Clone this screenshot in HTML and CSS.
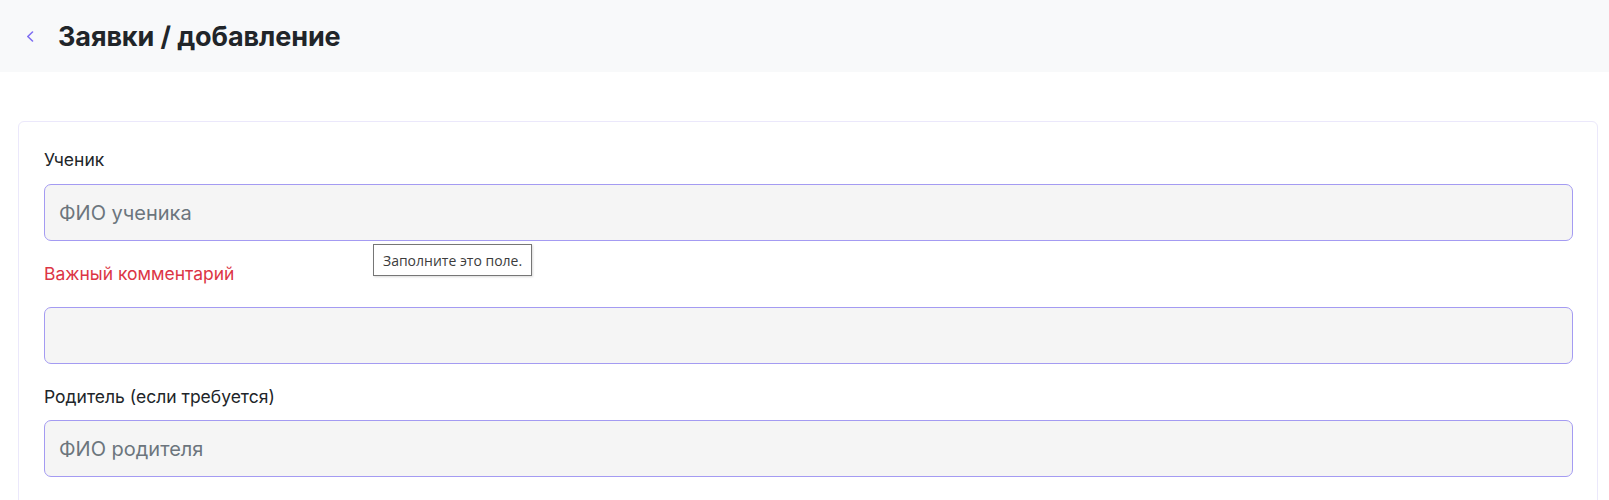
FILE: index.html
```html
<!DOCTYPE html>
<html lang="ru">
<head>
<meta charset="utf-8">
<title>Заявки / добавление</title>
<link rel="stylesheet" href="styles.css">
</head>
<body>
<header class="topbar">
  <a class="back" href="#" aria-label="Назад">
    <svg width="8" height="11" viewBox="0 0 8 11"><path d="M6.5 1 L1.8 5.5 L6.5 10" fill="none" stroke="#7f6ef2" stroke-width="1.6" stroke-linecap="round" stroke-linejoin="round"/></svg>
  </a>
  <h1 class="title">Заявки / добавление</h1>
</header>
<main class="page">
  <form class="card">
    <div class="field">
      <label class="label">Ученик</label>
      <div class="input-wrap">
        <input class="input" type="text" placeholder="ФИО ученика">
        <div class="tooltip">Заполните это поле.</div>
      </div>
    </div>
    <div class="field">
      <label class="label label-danger">Важный комментарий</label>
      <input class="input" type="text">
    </div>
    <div class="field">
      <label class="label label-tight">Родитель (если требуется)</label>
      <input class="input" type="text" placeholder="ФИО родителя">
    </div>
  </form>
</main>
</body>
</html>
```
FILE: styles.css
```css
* { box-sizing: border-box; }
html, body { margin: 0; padding: 0; background: #ffffff; }
body {
  font-family: Inter, "Noto Sans", sans-serif;
  color: #212529;
  overflow: hidden;
}
.topbar {
  height: 72px;
  background: #f8f9fa;
  display: flex;
  align-items: center;
  padding-left: 26px;
}
.back {
  display: flex;
  align-items: center;
  width: 32px;
  height: 20px;
  margin-top: 1px;
}
.title {
  margin: 0;
  font-size: 27px;
  font-weight: 700;
  color: #212529;
  letter-spacing: -0.1px;
}
.page {
  padding: 49px 11px 0 18px;
}
.card {
  border: 1px solid #ebe8fb;
  border-radius: 6px;
  padding: 26px 24px 40px 25px;
  background: #fff;
}
.field { display: flex; flex-direction: column; }
.field + .field { margin-top: 21px; }
.label {
  font-size: 17.5px;
  line-height: 24px;
  color: #212529;
  margin-bottom: 12px;
}
.label-danger { color: #dc3545; margin-bottom: 21px; }
.label-tight { margin-bottom: 11px; }
.input-wrap { position: relative; }
.input {
  display: block;
  width: 100%;
  height: 57px;
  border: 1px solid #a49bf2;
  border-radius: 7px;
  background: #f5f5f5;
  padding: 0 14px;
  font-family: Inter, "Noto Sans", sans-serif;
  font-size: 20px;
  color: #212529;
  outline: none;
}
.input::placeholder { color: #6c757d; }
.tooltip {
  position: absolute;
  left: 329px;
  top: 60px;
  height: 32px;
  padding: 0 9px;
  display: flex;
  align-items: center;
  border: 1px solid #767676;
  background: #fff;
  font-family: "Open Sans", "Noto Sans", sans-serif;
  font-size: 14px;
  color: #3c3c3c;
  box-shadow: 1px 1px 2px rgba(0,0,0,0.15);
  white-space: nowrap;
  z-index: 2;
}
```
